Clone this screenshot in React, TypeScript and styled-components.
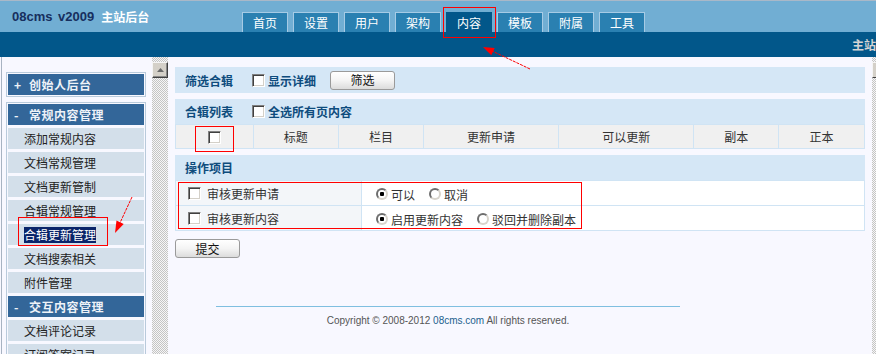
import React from 'react';
import styled, {createGlobalStyle} from 'styled-components';

const GlobalStyle = createGlobalStyle`
  body {
    margin: 0;
    background: #f8f8ff;
    font-family: "Noto Sans CJK SC", "Liberation Sans", sans-serif;
    font-size: 12px;
    color: #333;
  }
`;

const tabs = ['首页', '设置', '用户', '架构', '内容', '模板', '附属', '工具'];
const menuItems = ['添加常规内容', '文档常规管理', '文档更新管制', '合辑常规管理', '合辑更新管理', '文档搜索相关', '附件管理'];
const columns = [
  {title: '', width: 78},
  {title: '标题', width: 85},
  {title: '栏目', width: 86},
  {title: '更新申请', width: 135},
  {title: '可以更新', width: 136},
  {title: '副本', width: 85},
  {title: '正本', width: 86},
];

export default function App() {
  return (
    <Shell>
      <GlobalStyle />
      <TopBar>
        <Logo>
          <LogoVersion>08cms v2009</LogoVersion>
          <LogoName>主站后台</LogoName>
        </Logo>
        <Tabs>
          {tabs.map((t) => (
            <Tab key={t} $active={t === '内容'}>
              {t}
            </Tab>
          ))}
        </Tabs>
      </TopBar>
      <Band>主站后台</Band>
      <Body>
        <Sidebar>
          <MenuBox>
            <MenuHeader>
              <Sign>+</Sign>创始人后台
            </MenuHeader>
          </MenuBox>
          <MenuBox $grow>
            <MenuHeader>
              <Sign>-</Sign>常规内容管理
            </MenuHeader>
            {menuItems.map((item) => (
              <MenuItem key={item}>
                {item === '合辑更新管理' ? <Selected>{item}</Selected> : item}
              </MenuItem>
            ))}
            <MenuHeader>
              <Sign>-</Sign>交互内容管理
            </MenuHeader>
            <MenuItem>文档评论记录</MenuItem>
            <MenuItem>订阅答案记录</MenuItem>
          </MenuBox>
        </Sidebar>
        <ScrollTrack>
          <ScrollButton>
            <svg width="7" height="4" viewBox="0 0 7 4">
              <path d="M0 4 L3.5 0 L7 4 Z" fill="#6a6a6a" />
            </svg>
          </ScrollButton>
        </ScrollTrack>
        <Main>
          <Bar>
            <BarTitle>筛选合辑</BarTitle>
            <BarCheck>
              <CheckBox type="checkbox" />
              显示详细
            </BarCheck>
            <Button>筛选</Button>
          </Bar>
          <Section>
            <Bar>
              <BarTitle>合辑列表</BarTitle>
              <BarCheck>
                <CheckBox type="checkbox" />
                全选所有页内容
              </BarCheck>
            </Bar>
            <Grid>
              <tbody>
                <tr>
                  {columns.map((c, i) => (
                    <HeadCell key={i} style={{width: c.width}}>
                      {i === 0 ? <CheckBox type="checkbox" /> : c.title}
                    </HeadCell>
                  ))}
                </tr>
              </tbody>
            </Grid>
          </Section>
          <Section>
            <Bar>
              <BarTitle>操作项目</BarTitle>
            </Bar>
            <Grid>
              <tbody>
                <tr>
                  <LabelCell>
                    <CheckLabel>
                      <CheckBox type="checkbox" />
                      审核更新申请
                    </CheckLabel>
                  </LabelCell>
                  <ValueCell>
                    <RadioLabel>
                      <Radio type="radio" name="apply" defaultChecked />
                      可以
                    </RadioLabel>
                    <RadioLabel>
                      <Radio type="radio" name="apply" />
                      取消
                    </RadioLabel>
                  </ValueCell>
                </tr>
                <tr>
                  <LabelCell>
                    <CheckLabel>
                      <CheckBox type="checkbox" />
                      审核更新内容
                    </CheckLabel>
                  </LabelCell>
                  <ValueCell>
                    <RadioLabel>
                      <Radio type="radio" name="content" defaultChecked />
                      启用更新内容
                    </RadioLabel>
                    <RadioLabel>
                      <Radio type="radio" name="content" />
                      驳回并删除副本
                    </RadioLabel>
                  </ValueCell>
                </tr>
              </tbody>
            </Grid>
          </Section>
          <SubmitButton>提交</SubmitButton>
          <Footer>
            Copyright © 2008-2012 <FooterLink>08cms.com</FooterLink> All rights reserved.
          </Footer>
        </Main>
        <RightTrack>
          <RightButton />
        </RightTrack>
      </Body>
      <Annotations width="876" height="354" viewBox="0 0 876 354">
        <g fill="none" stroke="#f00" strokeWidth="1">
          <rect x="443.5" y="7.5" width="52" height="30" />
          <rect x="18.5" y="217.5" width="89" height="28" />
          <rect x="195.5" y="126.5" width="38" height="25" />
          <rect x="178.5" y="182.5" width="403" height="46" />
          <line x1="530" y1="69" x2="490" y2="50" strokeDasharray="3 1" />
          <line x1="132" y1="197" x2="119" y2="225" strokeDasharray="3 1" />
        </g>
        <g fill="#f00">
          <polygon points="483,47 494.7,48.1 491.3,55.3" />
          <polygon points="115,233 123.7,223.9 116.5,220.5" />
        </g>
      </Annotations>
    </Shell>
  );
}

const Shell = styled.div`
  position: relative;
  width: 876px;
  height: 354px;
  overflow: hidden;
  display: flex;
  flex-direction: column;
`;

const TopBar = styled.div`
  height: 32px;
  box-sizing: border-box;
  border-top: 1px solid #a9b8c8;
  background: #71aed3;
  display: flex;
  flex-shrink: 0;
`;

const Logo = styled.div`
  width: 242px;
  box-sizing: border-box;
  padding-left: 12px;
  align-self: center;
  display: flex;
  align-items: center;
  gap: 7px;
  font-weight: bold;
`;

const LogoVersion = styled.span`
  font-family: "Liberation Sans", sans-serif;
  font-size: 13px;
  color: #172f5e;
  word-spacing: 2px;
`;

const LogoName = styled.span`
  font-size: 12px;
  color: #fff;
`;

const Tabs = styled.div`
  display: flex;
  gap: 5px;
  align-self: flex-end;
`;

const Tab = styled.div<{$active?: boolean}>`
  width: 46px;
  height: 20px;
  box-sizing: border-box;
  border: 1px solid ${(p) => (p.$active ? '#02578a' : '#a6cbe5')};
  border-bottom: none;
  background: ${(p) => (p.$active ? '#02578a' : '#2a80b1')};
  color: #fff;
  font-size: 12px;
  line-height: 19px;
  text-align: center;
`;

const Band = styled.div`
  height: 25px;
  flex-shrink: 0;
  background: #02578a;
  color: #d4d4d4;
  font-weight: bold;
  line-height: 25px;
  padding-left: 852px;
  white-space: nowrap;
  overflow: hidden;
`;

const Body = styled.div`
  flex: 1;
  min-height: 0;
  display: flex;
`;

const Sidebar = styled.div`
  width: 151px;
  box-sizing: border-box;
  border-left: 1px solid #a8b3c2;
  margin-left: 1px;
  padding: 15px 0 0 4px;
  display: flex;
  flex-direction: column;
  gap: 5px;
`;

const MenuBox = styled.div<{$grow?: boolean}>`
  width: 140px;
  box-sizing: border-box;
  border: 1px solid #b9cadb;
  ${(p) => (p.$grow ? 'border-bottom: none;' : '')}
  padding: 1px 1px 0;
  display: flex;
  flex-direction: column;
  gap: 3px;
  padding-bottom: 1px;
`;

const MenuHeader = styled.div`
  height: 21px;
  line-height: 21px;
  background: #336699;
  color: #eef2f8;
  font-weight: bold;
  letter-spacing: 0.5px;
  padding-left: 6px;
  display: flex;
  flex-shrink: 0;
`;

const Sign = styled.span`
  width: 15px;
`;

const MenuItem = styled.div`
  height: 21px;
  line-height: 21px;
  background: #d3dfea;
  color: #222;
  padding-left: 16px;
  flex-shrink: 0;
`;

const Selected = styled.span`
  display: inline-block;
  line-height: 16px;
  background: #0a246a;
  color: #fff;
`;

const checker = `
  background-color: #f2f2f2;
  background-image: repeating-conic-gradient(#c4c4c4 0 25%, #f6f6f6 0 50%);
  background-size: 2px 2px;
`;

const ScrollTrack = styled.div`
  width: 16px;
  flex-shrink: 0;
  ${checker}
  padding-top: 5px;
`;

const ScrollButton = styled.div`
  width: 16px;
  height: 16px;
  box-sizing: border-box;
  background: #d4d0c8;
  border: 1px solid;
  border-color: #f4f4f4 #404040 #404040 #f4f4f4;
  box-shadow: inset -1px -1px 0 #888;
  display: flex;
  align-items: center;
  justify-content: center;
`;

const Main = styled.div`
  flex: 1;
  padding: 10px 7px 0;
  display: flex;
  flex-direction: column;
  align-items: flex-start;
`;

const Section = styled.div`
  align-self: stretch;
  background: #d5e7f6;
  margin-top: 6px;
`;

const Bar = styled.div`
  align-self: stretch;
  height: 26px;
  box-sizing: border-box;
  background: #d5e7f6;
  padding-left: 10px;
  display: flex;
  align-items: center;
  ${Section} > & {
    height: 25px;
  }
`;

const BarTitle = styled.span`
  font-weight: bold;
  color: #0e4c7d;
  width: 67px;
`;

const BarCheck = styled.label`
  display: flex;
  align-items: center;
  gap: 3px;
  font-weight: bold;
  color: #0e4c7d;
  margin-right: 14px;
`;

const CheckBox = styled.input`
  appearance: none;
  margin: 0;
  width: 13px;
  height: 13px;
  box-sizing: border-box;
  background: #fff;
  border: 1px solid;
  border-color: #808080 #fff #fff #808080;
  box-shadow: inset 1px 1px 0 #404040, inset -1px -1px 0 #d4d0c8;
  vertical-align: middle;
`;

const Radio = styled.input`
  appearance: none;
  margin: 0;
  width: 12px;
  height: 12px;
  box-sizing: border-box;
  border-radius: 50%;
  border: 2px solid;
  border-color: #6e6e6e #d8d4cc #d8d4cc #6e6e6e;
  background: #fff;
  &:checked {
    background: radial-gradient(circle, #000 0 2px, #fff 2.5px);
  }
`;

const Button = styled.button`
  width: 65px;
  height: 19px;
  padding: 0;
  font-family: "Noto Sans CJK SC", sans-serif;
  font-size: 12px;
  line-height: 16px;
  color: #111;
  background: linear-gradient(#ffffff, #f4f4f4 50%, #dcdcdc);
  border: 1px solid #9a9a9a;
  border-radius: 3px;
`;

const SubmitButton = styled(Button)`
  margin-top: 8px;
`;

const Grid = styled.table`
  width: 100%;
  border-collapse: collapse;
  td {
    border: 1px solid #d0e4f4;
    padding: 0;
  }
`;

const HeadCell = styled.td`
  height: 24px;
  background: #f0f0f0;
  text-align: center;
  color: #333;
  box-sizing: border-box;
  ${CheckBox} {
    vertical-align: -2px;
  }
`;

const LabelCell = styled.td`
  width: 173px;
  height: 24px;
  background: #f3f6f9;
  padding-left: 12px !important;
`;

const ValueCell = styled.td`
  background: #fff;
  padding-left: 14px !important;
`;

const CheckLabel = styled.label`
  display: flex;
  align-items: center;
  gap: 6px;
`;

const RadioLabel = styled.label`
  display: inline-flex;
  align-items: center;
  gap: 3px;
  margin-right: 14px;
  vertical-align: middle;
`;

const Footer = styled.div`
  margin: 48px 0 0 41px;
  width: 464px;
  border-top: 1px solid #7fbfe0;
  padding-top: 8px;
  text-align: center;
  font-family: "Liberation Sans", sans-serif;
  font-size: 10px;
  line-height: 12px;
  color: #555;
`;

const FooterLink = styled.span`
  color: #1c5f8e;
`;

const RightTrack = styled.div`
  width: 4px;
  flex-shrink: 0;
  ${checker}
  padding-top: 5px;
`;

const RightButton = styled.div`
  width: 4px;
  height: 16px;
  box-sizing: border-box;
  background: #d4d0c8;
  border-top: 1px solid #f4f4f4;
  border-left: 1px solid #f4f4f4;
  border-bottom: 1px solid #404040;
`;

const Annotations = styled.svg`
  position: absolute;
  left: 0;
  top: 0;
  pointer-events: none;
`;
